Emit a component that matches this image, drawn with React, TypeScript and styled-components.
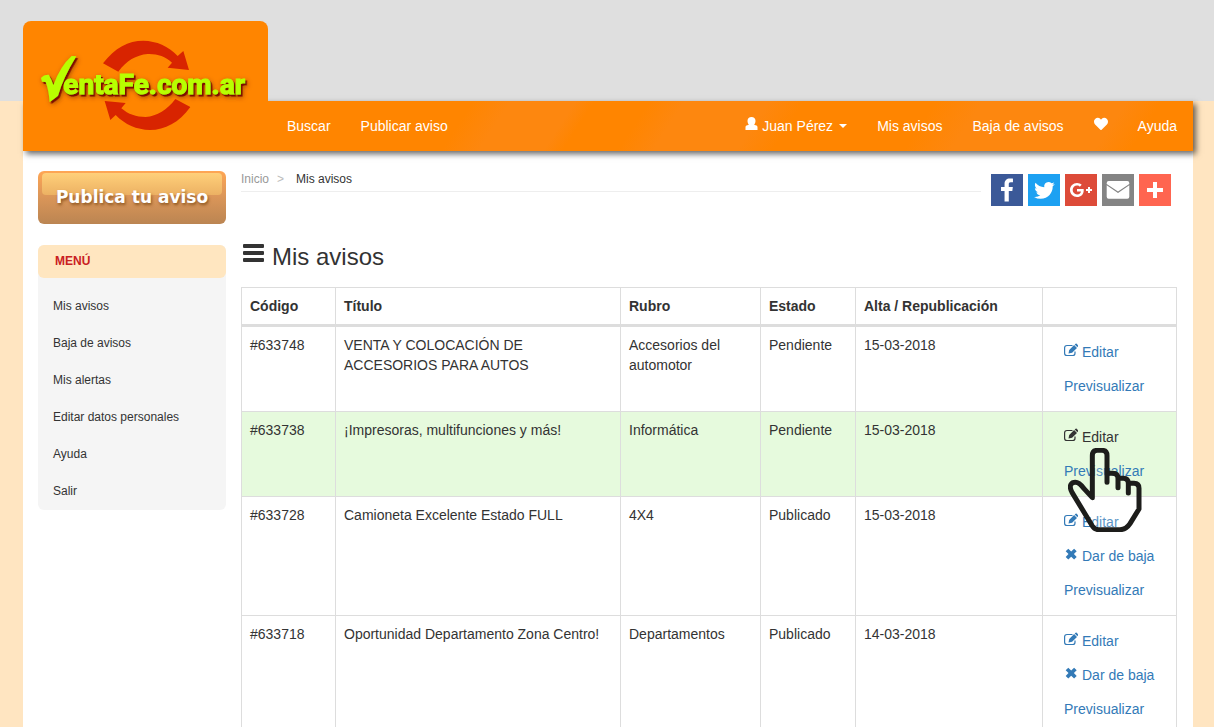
import React from "react";
import styled, { createGlobalStyle, css } from "styled-components";
import { FaHeart } from "react-icons/fa";

const orange = "#ff8500";
const tint = "#fd870f";
const line = "#dddddd";

const GlobalStyle = createGlobalStyle`
  *, *::before, *::after { box-sizing: border-box; }
  html { scrollbar-width: none; }
  body {
    margin: 0;
    min-height: 100vh;
    background: linear-gradient(#dfdfdf 101px, #ffe5c1 101px);
    color: #333;
    font: 14px/20px "Liberation Sans", Arial, sans-serif;
  }
  a { color: inherit; text-decoration: none; }
`;

const Page = styled.div`
  padding: 21px 21px 0 23px;
`;

const Header = styled.header`
  display: flex;
  align-items: flex-end;
  position: relative;
  z-index: 2;

  &::before {
    content: "";
    position: absolute;
    z-index: -1;
    inset: 80px 0 0;
    box-shadow: 3px 3px 6px rgba(0, 0, 0, 0.6);
  }
`;

const LogoLink = styled.a`
  flex: none;
  display: block;
  width: 245px;
  height: 130px;
  background: ${orange};
  border-radius: 8px 8px 0 0;

  svg { display: block; }
`;

const Nav = styled.nav`
  flex: 1;
  display: flex;
  justify-content: space-between;
  height: 50px;
  padding: 0 1px 0 4px;
  background: linear-gradient(
    123deg,
    ${orange} 172px, ${tint} 204px, ${tint} 258px, ${orange} 274px,
    ${orange} 320px, ${tint} 350px, ${tint} 420px, ${orange} 450px,
    ${orange} 560px, ${tint} 600px, ${tint} 720px, ${orange} 750px
  );
`;

const NavList = styled.ul`
  display: flex;
  margin: 0;
  padding: 0;
  list-style: none;
`;

const NavLink = styled.a`
  display: flex;
  align-items: center;
  gap: 4px;
  height: 50px;
  padding: 0 15px;
  color: #fff;

  svg { margin-bottom: 4px; }
`;

const Caret = styled.span`
  margin-left: 2px;
  border: 4px solid transparent;
  border-top-color: #fff;
  border-bottom: 0;
`;

const Body = styled.div`
  display: flex;
  gap: 15px;
  min-height: calc(100vh - 151px);
  padding: 20px 16px 0 15px;
  background: #fff;
`;

const Sidebar = styled.aside`
  flex: none;
  width: 188px;
`;

const PublishButton = styled.button`
  position: relative;
  display: block;
  width: 100%;
  height: 53px;
  padding: 0;
  border: 0;
  border-radius: 6px;
  background: linear-gradient(#ffa654, #dd9759 45%, #bb8552);
  color: #fff;
  font: bold 17px/51px "DejaVu Sans", Verdana, sans-serif;
  text-shadow: 1px 2px 3px rgba(110, 60, 10, 0.7);

  &::before {
    content: "";
    position: absolute;
    inset: 2px 4px 29px;
    border-radius: 4px;
    background: linear-gradient(#ffd07a, #ecb163);
  }

  span { position: relative; }
`;

const Menu = styled.nav`
  margin-top: 21px;
  border-radius: 6px;
  background: #f5f5f5;
  font-size: 12px;
`;

const MenuTitle = styled.h2`
  margin: 0 0 10px;
  padding: 0 17px;
  border-radius: 6px;
  background: #ffe6c0;
  color: #c9201f;
  font-size: 12px;
  line-height: 33px;
`;

const MenuList = styled.ul`
  margin: 0;
  padding: 0;
  list-style: none;
`;

const MenuLink = styled.a`
  display: block;
  padding: 10px 15px;
  line-height: 17px;
`;

const Main = styled.main`
  flex: 1;
  min-width: 0;
`;

const TopRow = styled.div`
  display: flex;
  align-items: flex-start;
  gap: 10px;
  padding-right: 6px;
`;

const Breadcrumb = styled.nav`
  flex: 1;
  display: flex;
  gap: 8px;
  padding-bottom: 4px;
  border-bottom: 1px solid #eee;
  font-size: 12px;
  line-height: 16px;

  a { color: #999; }
  i { margin-right: 4px; color: #bbb; font-style: normal; }
`;

const ShareList = styled.div`
  display: flex;
  gap: 5px;
  margin-top: 3px;
`;

const ShareLink = styled.a<{ $color: string }>`
  width: 32px;
  height: 32px;
  background: ${(p) => p.$color};

  svg { display: block; fill: #fff; }
`;

const Heading = styled.h1`
  display: flex;
  align-items: center;
  gap: 7px;
  margin: 36px 0 15px;
  font-size: 24px;
  font-weight: 400;
  line-height: 30px;

  svg { margin-bottom: 8px; }
`;

const Table = styled.table`
  width: 100%;
  table-layout: fixed;
  border-collapse: collapse;
  border: 1px solid ${line};
`;

const Col = styled.col<{ $width?: number }>`
  ${(p) => p.$width && css`width: ${p.$width}px;`}
`;

const Th = styled.th`
  padding: 8px;
  border: 1px solid ${line};
  border-bottom-width: 3px;
  text-align: left;
`;

const Td = styled.td`
  position: relative;
  padding: 8px;
  border: 1px solid ${line};
  vertical-align: top;
`;

const Row = styled.tr<{ $active?: boolean }>`
  ${(p) => p.$active && css`background: #e6fadd;`}
`;

const Action = styled.a<{ $hover?: boolean }>`
  display: flex;
  align-items: center;
  gap: 4px;
  padding: 7px 13px;
  color: ${(p) => (p.$hover ? "#333" : "#337ab7")};

  svg { margin-bottom: 4px; }
`;

const Pointer = styled.svg`
  position: absolute;
  z-index: 1;
  left: 25px;
  top: 36px;
  pointer-events: none;
`;

const LogoText = styled.text`
  font: bold 84px Roboto, "Liberation Sans", sans-serif;
`;

const Logo = () => (
  <svg width="245" height="130" viewBox="69 63 735 390" role="img" aria-label="VentaFe.com.ar">
    <defs>
      <filter id="logo-shadow" x="-10%" y="-20%" width="120%" height="150%">
        <feDropShadow dx="5" dy="6" stdDeviation="1.5" floodColor="#7d1000" floodOpacity="1" />
        <feDropShadow dx="2" dy="4" stdDeviation="6" floodColor="#7d3000" floodOpacity="0.6" />
      </filter>
    </defs>
    <g fill="#d82400">
      <path d="M309 190C345 143 385 122 430 122C470 123 505 138 533 168L550 153L567 210L503 203L516 188C495 169 472 161 443 162C408 165 379 182 355 215Z" />
      <path d="M571 321C537 368 495 390 450 390C410 389 375 374 347 345L331 360L314 303L377 309L364 325C385 343 408 351 437 351C472 348 501 330 526 297Z" />
    </g>
    <g fill="#b8ff00" filter="url(#logo-shadow)">
      <path d="M123 234Q130 224 146 224Q156 240 160 256Q181 198 215 168L229 169Q190 232 174 287Q163 296 149 306Q146 268 137 246L126 245Z" />
      <LogoText x="190" y="283" stroke="#b8ff00" strokeWidth="3">entaFe.com.ar</LogoText>
    </g>
  </svg>
);

const UserIcon = () => (
  <svg width="13" height="14" viewBox="0 0 13 14" fill="#fff" aria-hidden="true">
    <path d="M6.500 0C8.900 0 10.500 1.500 10.500 3.800C10.500 5.400 9.900 6.800 9.100 7.700L11.400 8.600C12.200 9 12.500 9.600 12.500 10.400V13H.5V10.400C.5 9.600.8 9 1.600 8.600L3.900 7.700C3.100 6.800 2.500 5.400 2.500 3.800C2.500 1.500 4.100 0 6.500 0Z" />
  </svg>
);

const BarsIcon = () => (
  <svg width="24" height="20" viewBox="0 0 24 20" fill="#333" aria-hidden="true">
    <rect x="2" y="1" width="21" height="4" rx="1" />
    <rect x="2" y="8" width="21" height="4" rx="1" />
    <rect x="2" y="15" width="21" height="4" rx="1" />
  </svg>
);

const EditIcon = () => (
  <svg width="14" height="14" viewBox="0 0 14 14" aria-hidden="true">
    <path d="M8.500 2.500H3Q.6 2.500.6 4.800V10.200Q.6 12.500 3 12.500H8.600Q11 12.500 11 10.200V8.500" fill="none" stroke="currentColor" strokeWidth="1.200" />
    <path d="M4.500 10.500L5.200 6.900L10.100 2L13 4.900L8.100 9.800ZM10.700 1.500L11.600.7Q12.200.3 12.700.8L14 2.200Q14.300 2.800 14 3.300L13.400 4.300Z" fill="currentColor" />
  </svg>
);

const RemoveIcon = () => (
  <svg width="14" height="14" viewBox="0 0 14 14" aria-hidden="true">
    <path d="M1.700 4.300L4.300 1.700L7.200 4.500L10.100 1.700L12.700 4.300L9.900 7.100L12.700 10L10.100 12.600L7.200 9.800L4.300 12.600L1.700 10L4.500 7.100Z" fill="currentColor" />
  </svg>
);

const PointerHand = () => (
  <Pointer width="74" height="84" viewBox="114 384 222 252" aria-hidden="true">
    <path
      d="M187 533V407Q187 391 202 391H216Q231 391 231 407V460H248Q263 460 263 475H280Q294 475 294 490H312Q327 490 327 505V567L300 611Q288 629 270 629H206Q194 629 187 618L126 517C114 495 126 487 136 487C148 487 156 498 162 506Z"
      fill="#fff"
      fillOpacity="0.2"
    />
    <path
      d="M231 487V407Q231 391 216 391H202Q187 391 187 407V533L162 506C156 498 148 487 136 487C126 487 114 495 126 517L187 618Q194 629 206 629H270Q288 629 300 611L327 567V505Q327 490 312 490H295V519M231 460H248Q264 460 264 476V503M264 475H280Q295 475 295 491"
      fill="none"
      stroke="#1d1d1b"
      strokeWidth="15"
      strokeLinecap="round"
      strokeLinejoin="round"
    />
  </Pointer>
);

const networks = [
  {
    name: "Facebook",
    color: "#3b5998",
    path: "M17.780 27.500V17.008h3.522l.527-4.090h-4.050v-2.610c0-1.182.330-1.990 2.023-1.990h2.166V4.660c-.375-.050-1.660-.160-3.155-.160-3.123 0-5.260 1.905-5.260 5.405v3.016h-3.530v4.090h3.530V27.500h4.223z",
  },
  {
    name: "Twitter",
    color: "#1da1f2",
    viewBox: "-3 -3 37 37",
    path: "M28 8.557a9.913 9.913 0 0 1-2.828.775 4.930 4.930 0 0 0 2.166-2.725 9.738 9.738 0 0 1-3.130 1.194 4.920 4.920 0 0 0-3.593-1.550 4.924 4.924 0 0 0-4.794 6.049c-4.090-.210-7.720-2.170-10.150-5.150a4.942 4.942 0 0 0-.665 2.477c0 1.710.870 3.214 2.190 4.100a4.968 4.968 0 0 1-2.230-.616v.060c0 2.390 1.700 4.380 3.952 4.830-.414.115-.850.174-1.297.174-.318 0-.626-.030-.928-.086a4.935 4.935 0 0 0 4.600 3.420 9.893 9.893 0 0 1-6.114 2.107c-.398 0-.790-.023-1.175-.068a13.953 13.953 0 0 0 7.550 2.213c9.056 0 14.010-7.507 14.010-14.013 0-.213-.005-.426-.015-.637.960-.695 1.795-1.560 2.455-2.550z",
  },
  {
    name: "Google+",
    color: "#dd4b39",
    path: "M27 15h-2v-2h-2v2h-2v2h2v2h2v-2h2m-15-2v2.400h3.970c-.160 1.030-1.200 3.020-3.970 3.020-2.390 0-4.340-1.980-4.340-4.420s1.950-4.420 4.340-4.420c1.360 0 2.270.580 2.790 1.080l1.900-1.830C15.470 9.690 13.890 9 12 9c-3.870 0-7 3.130-7 7s3.130 7 7 7c4.040 0 6.720-2.840 6.720-6.840 0-.460-.050-.810-.110-1.160H12z",
  },
  {
    name: "Email",
    color: "#848484",
    path: "M27.300 11.300V22.700Q27.300 24.700 25.300 24.700H6.700Q4.700 24.700 4.700 22.700V11.300L16 18.900ZM27.300 9.900L16 17.400L4.700 9.900V9Q4.700 7 6.700 7H25.300Q27.300 7 27.300 9Z",
  },
  { name: "Compartir", color: "#ff6550", path: "M14 8h4v6h6v4h-6v6h-4v-6H8v-4h6z" },
];

const menuItems = ["Mis avisos", "Baja de avisos", "Mis alertas", "Editar datos personales", "Ayuda", "Salir"];

const ads = [
  { code: "#633748", title: "VENTA Y COLOCACIÓN DE ACCESORIOS PARA AUTOS", category: "Accesorios del automotor", status: "Pendiente", date: "15-03-2018" },
  { code: "#633738", title: "¡Impresoras, multifunciones y más!", category: "Informática", status: "Pendiente", date: "15-03-2018", active: true },
  { code: "#633728", title: "Camioneta Excelente Estado FULL", category: "4X4", status: "Publicado", date: "15-03-2018" },
  { code: "#633718", title: "Oportunidad Departamento Zona Centro!", category: "Departamentos", status: "Publicado", date: "14-03-2018" },
];

export default function App() {
  return (
    <>
      <GlobalStyle />
      <Page>
        <Header>
          <LogoLink href="#"><Logo /></LogoLink>
          <Nav>
            <NavList>
              <li><NavLink href="#">Buscar</NavLink></li>
              <li><NavLink href="#">Publicar aviso</NavLink></li>
            </NavList>
            <NavList>
              <li><NavLink href="#"><UserIcon />Juan Pérez<Caret /></NavLink></li>
              <li><NavLink href="#">Mis avisos</NavLink></li>
              <li><NavLink href="#">Baja de avisos</NavLink></li>
              <li><NavLink href="#" aria-label="Favoritos"><FaHeart size={14} /></NavLink></li>
              <li><NavLink href="#">Ayuda</NavLink></li>
            </NavList>
          </Nav>
        </Header>
        <Body>
          <Sidebar>
            <PublishButton type="button"><span>Publica tu aviso</span></PublishButton>
            <Menu>
              <MenuTitle>MENÚ</MenuTitle>
              <MenuList>
                {menuItems.map((item) => (
                  <li key={item}><MenuLink href="#">{item}</MenuLink></li>
                ))}
              </MenuList>
            </Menu>
          </Sidebar>
          <Main>
            <TopRow>
              <Breadcrumb>
                <a href="#">Inicio</a>
                <i>&gt;</i>
                <span>Mis avisos</span>
              </Breadcrumb>
              <ShareList>
                {networks.map((n) => (
                  <ShareLink key={n.name} href="#" aria-label={n.name} $color={n.color}>
                    <svg width="32" height="32" viewBox={n.viewBox ?? "0 0 32 32"}><path d={n.path} /></svg>
                  </ShareLink>
                ))}
              </ShareList>
            </TopRow>
            <Heading><BarsIcon />Mis avisos</Heading>
            <Table>
              <colgroup>
                <Col $width={94} />
                <Col />
                <Col $width={140} />
                <Col $width={95} />
                <Col $width={187} />
                <Col $width={134} />
              </colgroup>
              <thead>
                <tr>
                  <Th>Código</Th>
                  <Th>Título</Th>
                  <Th>Rubro</Th>
                  <Th>Estado</Th>
                  <Th>Alta / Republicación</Th>
                  <Th aria-label="Acciones" />
                </tr>
              </thead>
              <tbody>
                {ads.map((ad) => (
                  <Row key={ad.code} $active={ad.active}>
                    <Td>{ad.code}</Td>
                    <Td>{ad.title}</Td>
                    <Td>{ad.category}</Td>
                    <Td>{ad.status}</Td>
                    <Td>{ad.date}</Td>
                    <Td>
                      <Action href="#" $hover={ad.active}><EditIcon />Editar</Action>
                      {ad.status === "Publicado" && <Action href="#"><RemoveIcon />Dar de baja</Action>}
                      <Action href="#">Previsualizar</Action>
                      {ad.active && <PointerHand />}
                    </Td>
                  </Row>
                ))}
              </tbody>
            </Table>
          </Main>
        </Body>
      </Page>
    </>
  );
}
